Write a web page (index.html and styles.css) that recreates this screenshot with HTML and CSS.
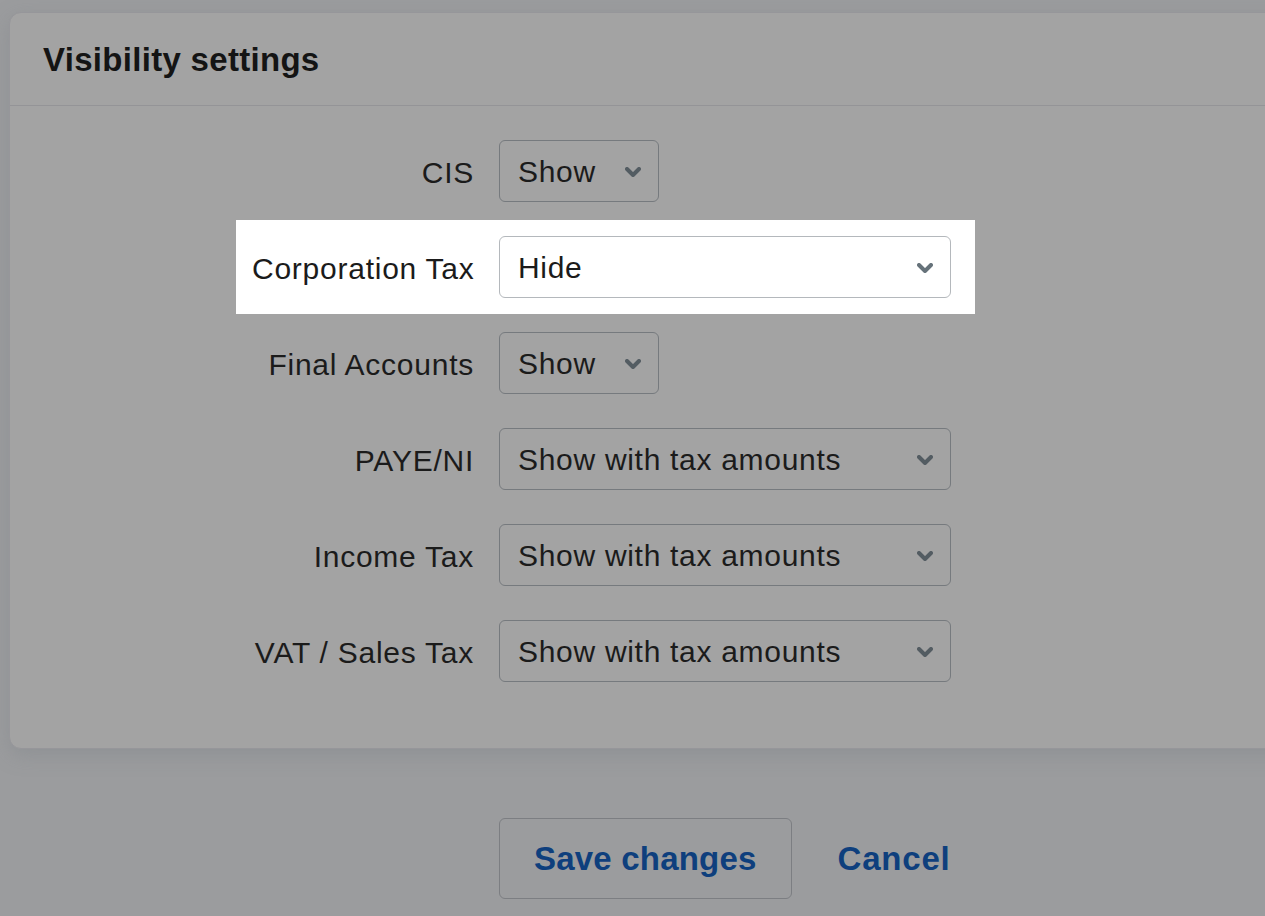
FILE: index.html
```html
<!DOCTYPE html>
<html lang="en">
<head>
    <meta charset="UTF-8">
    <meta name="viewport" content="width=device-width, initial-scale=1.0">
    <title>Visibility settings</title>
    <link rel="stylesheet" href="styles.css">
</head>
<body>
    <div class="page">
        <div class="card">
            <div class="card-header">
                <h2>Visibility settings</h2>
            </div>

            <div class="card-body">
                <div class="rows">
                    <div class="row">
                        <label class="label">CIS</label>
                        <div class="select select-sm">
                            <span>Show</span>
                            <svg class="chevron" width="16" height="10" viewBox="0 0 16 10"><path d="M2 2 L8 8 L14 2" /></svg>
                        </div>
                    </div>
                    <div class="row row-highlight">
                        <label class="label">Corporation Tax</label>
                        <div class="select select-lg">
                            <span>Hide</span>
                            <svg class="chevron" width="16" height="10" viewBox="0 0 16 10"><path d="M2 2 L8 8 L14 2" /></svg>
                        </div>
                    </div>
                    <div class="row">
                        <label class="label">Final Accounts</label>
                        <div class="select select-sm">
                            <span>Show</span>
                            <svg class="chevron" width="16" height="10" viewBox="0 0 16 10"><path d="M2 2 L8 8 L14 2" /></svg>
                        </div>
                    </div>
                    <div class="row">
                        <label class="label">PAYE/NI</label>
                        <div class="select select-lg">
                            <span>Show with tax amounts</span>
                            <svg class="chevron" width="16" height="10" viewBox="0 0 16 10"><path d="M2 2 L8 8 L14 2" /></svg>
                        </div>
                    </div>
                    <div class="row">
                        <label class="label">Income Tax</label>
                        <div class="select select-lg">
                            <span>Show with tax amounts</span>
                            <svg class="chevron" width="16" height="10" viewBox="0 0 16 10"><path d="M2 2 L8 8 L14 2" /></svg>
                        </div>
                    </div>
                    <div class="row">
                        <label class="label">VAT / Sales Tax</label>
                        <div class="select select-lg">
                            <span>Show with tax amounts</span>
                            <svg class="chevron" width="16" height="10" viewBox="0 0 16 10"><path d="M2 2 L8 8 L14 2" /></svg>
                        </div>
                    </div>
                </div>
            </div>
        </div>

        <div class="actions">
            <button class="btn">Save changes</button>
            <a class="link" href="#">Cancel</a>
        </div>
    </div>
</body>
</html>
```

FILE: styles.css
```css
* {
    margin: 0;
    padding: 0;
    box-sizing: border-box;
}

body {
    font-family: 'Liberation Sans', Arial, sans-serif;
    background: #9b9c9e;
    color: #1b1b1b;
    overflow: hidden;
    height: 916px;
}

.page {
    padding: 12px 0 0 9px;
}

.card {
    width: 1300px;
    background: #a3a3a3;
    border: 1px solid #96969a;
    border-radius: 12px;
    box-shadow: 0 6px 20px rgba(120, 125, 132, 0.35);
}

.card-header {
    height: 93px;
    padding: 0 33px;
    display: flex;
    align-items: center;
    border-bottom: 1px solid #949497;
}

.card-header h2 {
    font-size: 33px;
    font-weight: 700;
    letter-spacing: 0.3px;
    color: #141414;
    padding-top: 2px;
}

.card-body {
    padding: 18px 0 50px 226px;
}

.rows {
    display: flex;
    flex-direction: column;
    align-items: flex-start;
    gap: 2px;
}

.row {
    display: flex;
    align-items: center;
    gap: 25px;
    padding: 16px 24px 16px 16px;
}

.row-highlight {
    background: #fff;
}

.label {
    width: 222px;
    text-align: right;
    white-space: nowrap;
    font-size: 30px;
    letter-spacing: 0.75px;
    padding-top: 3px;
}

.select {
    height: 62px;
    display: flex;
    align-items: center;
    justify-content: space-between;
    padding: 1px 17px 0 18px;
    border: 1px solid #767a7e;
    border-radius: 6px;
    font-size: 30px;
    letter-spacing: 0.7px;
    white-space: nowrap;
}

.select-sm { width: 160px; }
.select-lg { width: 452px; }

.row-highlight .select {
    border-color: #b4b8bc;
}

.chevron path {
    fill: none;
    stroke: #535c62;
    stroke-width: 4;
    stroke-linecap: round;
    stroke-linejoin: round;
}

.row-highlight .chevron path {
    stroke: #66727a;
}

.actions {
    display: flex;
    align-items: center;
    gap: 46px;
    margin-top: 69px;
    padding-left: 490px;
}

.btn {
    height: 81px;
    padding: 0 34px;
    background: transparent;
    border: 1px solid #7c7e82;
    border-radius: 6px;
    font-family: inherit;
    font-size: 33px;
    font-weight: 700;
    letter-spacing: 0.2px;
    color: #0e3f7d;
    cursor: pointer;
}

.link {
    font-size: 33px;
    font-weight: 700;
    letter-spacing: 0.8px;
    color: #0e3f7d;
    text-decoration: none;
}
```
